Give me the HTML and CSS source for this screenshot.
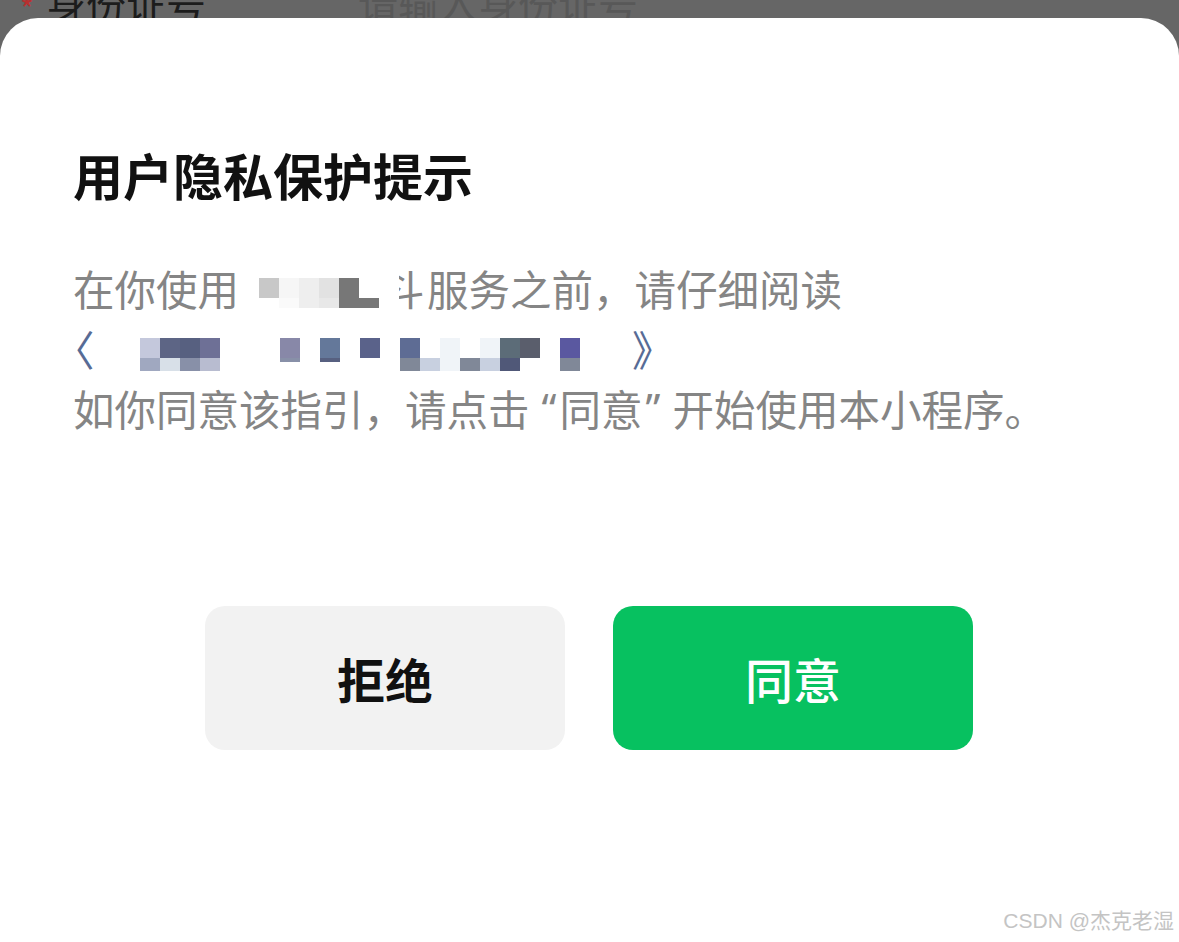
FILE: index.html
```html
<!DOCTYPE html>
<html lang="zh-CN">

<head>
  <meta charset="UTF-8">
  <meta name="viewport" content="width=device-width, initial-scale=1.0">
  <title>用户隐私保护提示</title>

  <link rel="stylesheet" href="styles.css">
</head>

<body>
  <!-- 遮罩下露出的表单行 -->
  <div class="under">
    <div class="under-row">
      <span class="star">*</span>
      <span class="label">身份证号</span>
      <span class="holder">请输入身份证号</span>
    </div>
  </div>

  <div class="sheet">
    <h2 class="title">用户隐私保护提示</h2>

    <div class="desc">
      <div class="line">
        <span>在你使用</span>
        <span class="mosaic m1">
          <i></i><i class="g1"></i><i class="g5"></i><i class="g2"></i><i class="g3"></i><i class="g4"></i><i></i><i></i>
          <i></i><i></i><i class="g6"></i><i class="g2"></i><i class="g7"></i><i class="g4"></i><i class="g4"></i><i></i>
        </span>
        <span class="cut"><b>斗</b></span>
        <span>服务之前，请仔细阅读</span>
      </div>
      <div class="line">
        <span class="open">〈</span>
        <span class="mosaic m2">
          <i class="b1"></i><i class="b2"></i><i class="b3"></i><i class="b4"></i><i></i><i></i><i></i><i class="b5"></i><i></i><i class="b6"></i><i></i>
          <i class="b7"></i><i></i><i class="b8"></i><i></i><i class="b9"></i><i></i><i class="b9"></i><i class="b10"></i><i class="b11"></i><i></i><i class="b12"></i>

          <i class="b13"></i><i class="b14"></i><i class="b15"></i><i class="b16"></i><i></i><i></i><i></i><i class="b15 thin"></i><i></i><i class="b3 thin"></i><i></i>
          <i></i><i></i><i class="b17"></i><i class="b18"></i><i class="b9"></i><i class="b17"></i><i class="b18"></i><i class="b19"></i><i></i><i></i><i class="b17"></i>
        </span>
        <span class="close">》</span>
      </div>
      <div class="line">
        <span>如你同意该指引，请点击</span><span class="q q-l">“</span><span>同意</span><span class="q q-r">”</span><span>开始使用本小程序。</span>
      </div>
    </div>

    <div class="btns">
      <div class="btn btn-no">拒绝</div>
      <div class="btn btn-ok">同意</div>
    </div>
  </div>

  <div class="mark">CSDN @杰克老湿</div>
</body>

</html>
```

FILE: styles.css
```css
* {
  padding: 0;
  margin: 0;
  box-sizing: border-box;
}

body {
  width: 1179px;
  height: 942px;
  overflow: hidden;
  background-color: #666;
  font-family: "Noto Sans CJK SC", "Noto Sans", sans-serif;
  position: relative;
}

/* 顶部被遮罩盖住的表单 */
.under {
  height: 18px;
  overflow: hidden;
  display: flex;
  align-items: flex-end;
}

.under-row {
  display: flex;
  align-items: flex-end;
  font-size: 40px;
  line-height: 40px;
  margin-bottom: -5px;
}

.star {
  color: #b83030;
  font-size: 30px;
  line-height: 30px;
  margin-left: 20px;
}

.label {
  color: #1c1c1c;
  margin-left: 12px;
}

.holder {
  color: #585858;
  margin-left: 152px;
}

/* 弹层 */
.sheet {
  height: 924px;
  background-color: #fff;
  border-radius: 38px 38px 0 0;
  padding: 126px 0 0 73px;
}

.title {
  font-size: 50px;
  line-height: 60px;
  font-weight: 700;
  color: #111;
}

.desc {
  margin-top: 54px;
  font-size: 41.5px;
  color: #858585;
}

.line {
  display: flex;
  height: 60px;
  line-height: 60px;
  white-space: nowrap;
}

.q {
  display: inline-block;
  width: 30px;
  font-family: "Noto Sans", sans-serif;
}

.q-l {
  text-align: right;
  padding-right: 3px;
}

.q-r {
  text-align: left;
  padding-left: 3px;
}

.mosaic {
  display: grid;
  grid-auto-rows: 20px;
  align-content: start;
}

.mosaic i {
  display: block;
}

.m1 {
  width: 160px;
  padding: 20px 0 0 0;
  grid-template-columns: repeat(8, 20px);
  grid-template-rows: 20px 10px;
}

.m2 {
  width: 440px;
  padding-top: 20px;
  grid-template-columns: repeat(22, 20px);
  grid-template-rows: 20px 13px;
}

.g1 { background-color: #c8c8c8; }
.g2 { background-color: #eeeeee; }
.g3 { background-color: #e2e2e2; }
.g4 { background-color: #777; }
.g5 { background-color: #f6f6f6; }
.g6 { background-color: #fafafa; }
.g7 { background-color: #e8e8e8; }

.b1 { background-color: #c4c8dc; }
.b2 { background-color: #5d6585; }
.b3 { background-color: #576080; }
.b4 { background-color: #6e7096; }
.b5 { background-color: #8888a8; }
.b6 { background-color: #64789a; }
.b7 { background-color: #5a628a; }
.b8 { background-color: #5e6c94; }
.b9 { background-color: #f0f4f8; }
.b10 { background-color: #5c6c78; }
.b11 { background-color: #5a5e6c; }
.b12 { background-color: #5a58a0; }
.b13 { background-color: #a0a8c0; }
.b14 { background-color: #d8e0e8; }
.b15 { background-color: #8890a8; }
.b16 { background-color: #b8bcd0; }
.b17 { background-color: #808898; }
.b18 { background-color: #c8d0e0; }
.b19 { background-color: #505878; }

.mosaic i.thin {
  height: 4px;
}

.cut {
  width: 28px;
  overflow: hidden;
  display: inline-block;
}

.cut b {
  font-weight: 400;
  display: inline-block;
  margin-left: -16px;
}

.open,
.close {
  color: #576b95;
}

.open {
  width: 87px;
  margin-left: -20px;
}

.close {
  margin-left: 52px;
}

/* 按钮 */
.btns {
  display: flex;
  gap: 48px;
  margin: 168px 0 0 132px;
}

.btn {
  width: 360px;
  height: 144px;
  border-radius: 20px;
  font-size: 48px;
  display: flex;
  align-items: center;
  justify-content: center;
}

.btn-no {
  background-color: #f2f2f2;
  color: #111;
  font-weight: 700;
}

.btn-ok {
  background-color: #07c160;
  color: #fff;
  font-weight: 500;
}

.mark {
  position: absolute;
  right: 5px;
  bottom: 8px;
  font-family: "Liberation Sans", "Noto Sans CJK SC", sans-serif;
  font-size: 21px;
  color: #c4c4c4;
}
```
